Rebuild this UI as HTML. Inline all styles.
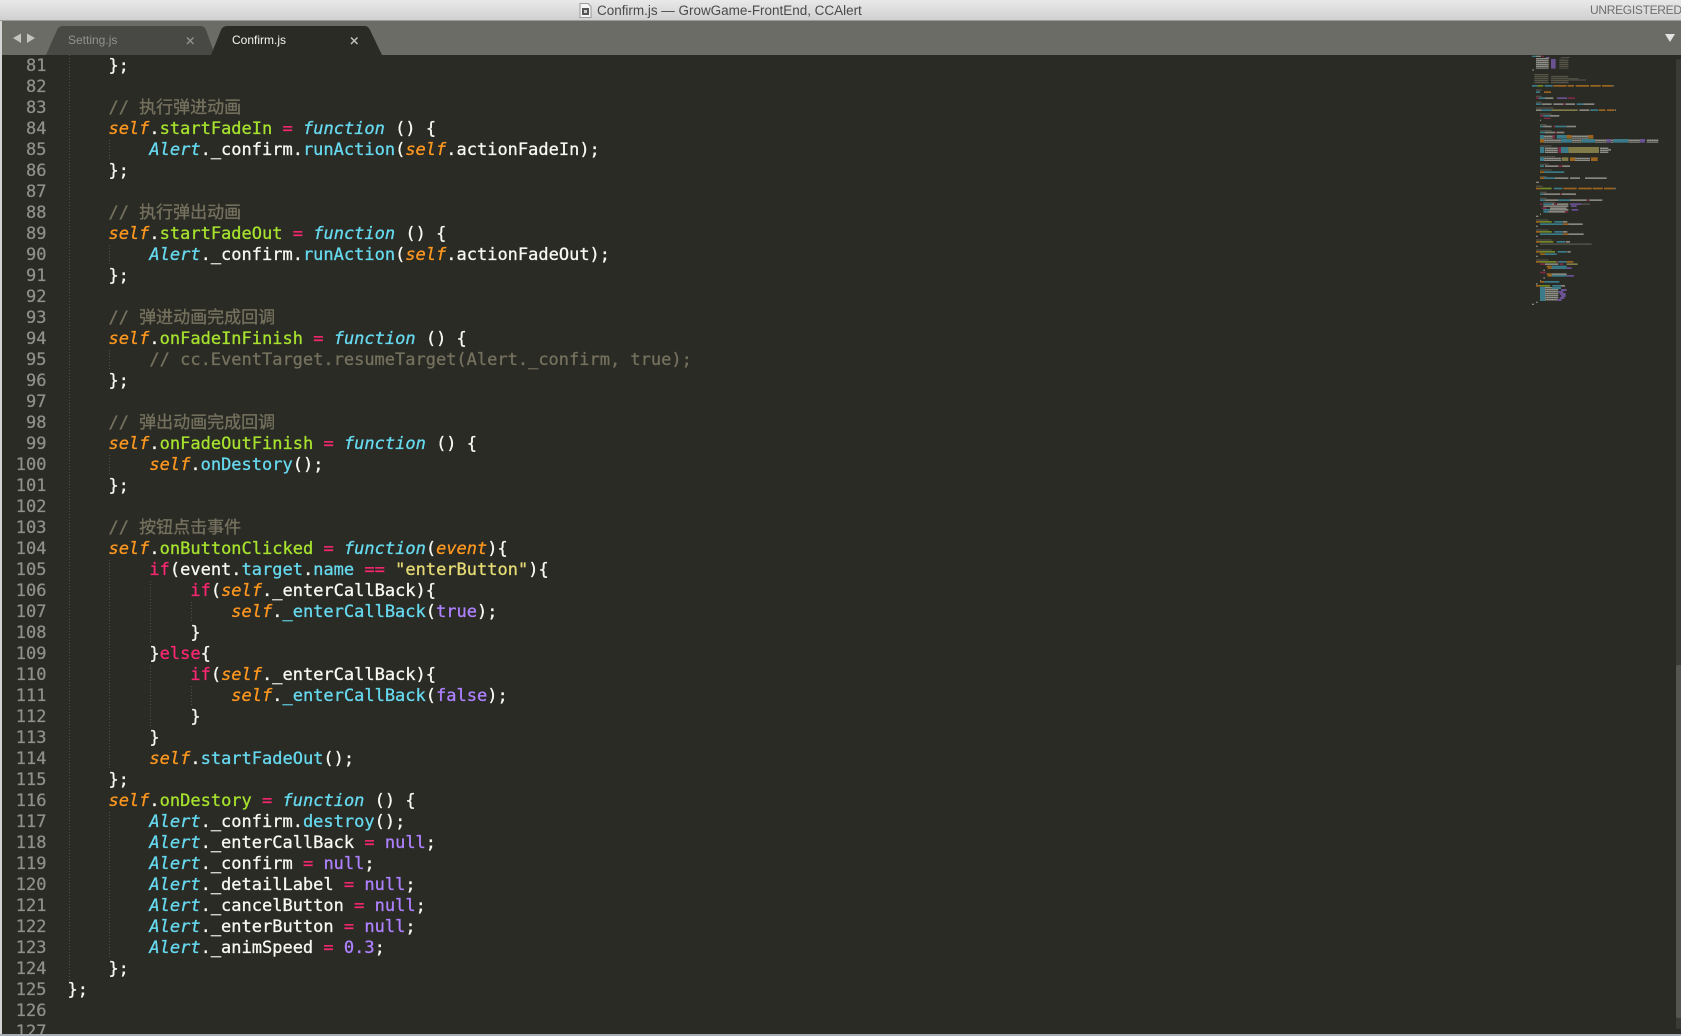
<!DOCTYPE html>
<html lang="zh"><head><meta charset="utf-8"><title>Confirm.js</title>
<style>
html,body{margin:0;padding:0;background:#2a2b25}
body{width:1681px;height:1036px;overflow:hidden;position:relative;font-family:"Liberation Sans",sans-serif}
#title{position:absolute;left:0;top:0;width:1681px;height:20px;background:linear-gradient(#e9e9e9,#d0d0d0);border-bottom:1px solid #9c9c9a;font-size:13.5px;color:#4a4a4a;line-height:21px}
#title .t{position:absolute;left:597px;top:0;white-space:nowrap;letter-spacing:-.02px}
#title .u{position:absolute;left:1590px;top:0;color:#6e6e6e;font-size:12px;letter-spacing:-.3px;white-space:nowrap}
#bar{position:absolute;left:2px;top:21px;width:1679px;height:34px;background:#6b6c66}
#ed{position:absolute;left:2px;top:55px;width:1679px;height:979px;background:#2a2b25;overflow:hidden}
#lstrip{position:absolute;left:0;top:21px;width:2px;height:1015px;background:#d4d4d4}
#bot{position:absolute;left:0;top:1034px;width:1681px;height:2px;background:#a9adb8}
.tab{position:absolute;top:0;left:0}
.tl{position:absolute;top:31px;font-size:12px;white-space:nowrap;line-height:18px}
#nums,#code{position:absolute;top:1px;margin:0;font-family:"DejaVu Sans Mono","Noto Sans CJK SC",monospace;font-size:17px;line-height:21px;white-space:pre}
#nums{left:0;width:44.5px;text-align:right;color:#8f908a;-webkit-text-stroke:.25px currentColor}
#code{left:65.5px;color:#f8f8f2;-webkit-text-stroke:.3px currentColor}
#code i{font-style:italic}
.c{color:#75715e}.k{color:#f92672}.o{color:#fd971f}.g{color:#a6e22e}.b{color:#66d9ef}.p{color:#ae81ff}.y{color:#e6db74}
.gd{position:absolute;width:1px;background:repeating-linear-gradient(#4f504a 0 1px,transparent 1px 3px)}
#sb{position:absolute;left:1676px;top:59px;width:5px;height:970px;background:#3a3b36;border-radius:2px 0 0 2px}
#th{position:absolute;left:1676px;top:665px;width:5px;height:353px;background:#555651;border-radius:2px 0 0 2px}
#mm{position:absolute;left:1525px;top:50px;opacity:.85}
</style></head><body>
<div id="title">
<svg style="position:absolute;left:579px;top:3px" width="13" height="15" viewBox="0 0 13 15"><path d="M1 .5H9L12 3.500V14.500H1Z" fill="#f4f4f4" stroke="#999"/><rect x="3" y="5" width="7" height="7" fill="#555"/><rect x="5" y="7" width="3" height="3" fill="#ccc"/></svg>
<span class="t">Confirm.js — GrowGame-FrontEnd, CCAlert</span><span class="u">UNREGISTERED</span></div>
<div id="lstrip"></div>
<div id="bar"></div>
<svg class="tab" width="1681" height="56" viewBox="0 0 1681 56">
<path d="M46 55 L57 30 Q59 26 63 26 H201 Q204 26 206 30 L215 55Z" fill="#484944"/>
<path d="M211 55 L221 30 Q223 26 227 26 H365 Q368 26 370 30 L382 55Z" fill="#2a2b25"/>
<path d="M13 38 L21 33.500 V43Z M35 38 L27 33.500 V43Z" fill="#c4c4c2"/>
<path d="M1665 34 H1675 L1670 42Z" fill="#e2e2e0"/>
<path d="M187 37.500 L193.500 44 M193.500 37.500 L187 44" stroke="#8f8f8b" stroke-width="1.500"/>
<path d="M351 37.500 L357.500 44 M357.500 37.500 L351 44" stroke="#c0c0be" stroke-width="1.500"/>
</svg>
<div class="tl" style="left:68px;color:#92928e">Setting.js</div>
<div class="tl" style="left:232px;color:#f4f4f2">Confirm.js</div>
<div id="ed">
<div class="gd" style="left:67px;top:0;height:925px"></div>
<div class="gd" style="left:107px;top:85px;height:21px"></div>
<div class="gd" style="left:107px;top:190px;height:21px"></div>
<div class="gd" style="left:107px;top:295px;height:21px"></div>
<div class="gd" style="left:107px;top:400px;height:21px"></div>
<div class="gd" style="left:107px;top:505px;height:210px"></div>
<div class="gd" style="left:107px;top:757px;height:147px"></div>
<div class="gd" style="left:148px;top:526px;height:63px"></div>
<div class="gd" style="left:148px;top:610px;height:63px"></div>
<div class="gd" style="left:189px;top:547px;height:21px"></div>
<div class="gd" style="left:189px;top:631px;height:21px"></div>
<pre id="nums">81
82
83
84
85
86
87
88
89
90
91
92
93
94
95
96
97
98
99
100
101
102
103
104
105
106
107
108
109
110
111
112
113
114
115
116
117
118
119
120
121
122
123
124
125
126
127</pre>
<pre id="code">    };

    <span class="c">// 执行弹进动画</span>
    <i class="o">self</i>.<span class="g">startFadeIn</span> <span class="k">=</span> <i class="b">function</i> () {
        <i class="b">Alert</i>._confirm.<span class="b">runAction</span>(<i class="o">self</i>.actionFadeIn);
    };

    <span class="c">// 执行弹出动画</span>
    <i class="o">self</i>.<span class="g">startFadeOut</span> <span class="k">=</span> <i class="b">function</i> () {
        <i class="b">Alert</i>._confirm.<span class="b">runAction</span>(<i class="o">self</i>.actionFadeOut);
    };

    <span class="c">// 弹进动画完成回调</span>
    <i class="o">self</i>.<span class="g">onFadeInFinish</span> <span class="k">=</span> <i class="b">function</i> () {
        <span class="c">// cc.EventTarget.resumeTarget(Alert._confirm, true);</span>
    };

    <span class="c">// 弹出动画完成回调</span>
    <i class="o">self</i>.<span class="g">onFadeOutFinish</span> <span class="k">=</span> <i class="b">function</i> () {
        <i class="o">self</i>.<span class="b">onDestory</span>();
    };

    <span class="c">// 按钮点击事件</span>
    <i class="o">self</i>.<span class="g">onButtonClicked</span> <span class="k">=</span> <i class="b">function</i>(<i class="o">event</i>){
        <span class="k">if</span>(event.<span class="b">target</span>.<span class="b">name</span> <span class="k">==</span> <span class="y">"enterButton"</span>){
            <span class="k">if</span>(<i class="o">self</i>._enterCallBack){
                <i class="o">self</i>.<span class="b">_enterCallBack</span>(<span class="p">true</span>);
            }
        }<span class="k">else</span>{
            <span class="k">if</span>(<i class="o">self</i>._enterCallBack){
                <i class="o">self</i>.<span class="b">_enterCallBack</span>(<span class="p">false</span>);
            }
        }
        <i class="o">self</i>.<span class="b">startFadeOut</span>();
    };
    <i class="o">self</i>.<span class="g">onDestory</span> <span class="k">=</span> <i class="b">function</i> () {
        <i class="b">Alert</i>._confirm.<span class="b">destroy</span>();
        <i class="b">Alert</i>._enterCallBack <span class="k">=</span> <span class="p">null</span>;
        <i class="b">Alert</i>._confirm <span class="k">=</span> <span class="p">null</span>;
        <i class="b">Alert</i>._detailLabel <span class="k">=</span> <span class="p">null</span>;
        <i class="b">Alert</i>._cancelButton <span class="k">=</span> <span class="p">null</span>;
        <i class="b">Alert</i>._enterButton <span class="k">=</span> <span class="p">null</span>;
        <i class="b">Alert</i>._animSpeed <span class="k">=</span> <span class="p">0.3</span>;
    };
};

</pre>
</div>
<div id="sb"></div><div id="th"></div>
<svg id="mm" width="140" height="260" viewBox="0 0 420 780">
<defs><style>.t{fill:#3f8a9b}.w{fill:#98988f}.v{fill:#7458a6}.r{fill:#b0701f}.n{fill:#7f9a24}.m{fill:#8c2a4c}.l{fill:#8f8a50}.d{fill:#55544a}.z{fill:url(#s)}.x{fill:url(#e)}</style>
<pattern id="s" width="7" height="6" patternUnits="userSpaceOnUse"><rect width="7" height="4" fill="#a0a098"/><rect x="3" y="4" width="4" height="2" fill="#6a6a63"/></pattern>
<pattern id="e" width="6" height="6" patternUnits="userSpaceOnUse"><rect width="6" height="4" fill="#5e5c4c"/></pattern></defs>
<rect class="t" x="21" y="17" width="12" height="4"/><rect class="w" x="33" y="17" width="15" height="4"/><rect class="m" x="50" y="17" width="7" height="4"/><rect class="v" x="62" y="21" width="12" height="4"/><rect class="d" x="108" y="21" width="27" height="3"/>
<rect class="z" x="33" y="24" width="38" height="32"/><rect class="v" x="78" y="27" width="14" height="29"/><rect class="x" x="103" y="26" width="27" height="30"/>
<rect class="w" x="22" y="58" width="5" height="4"/>
<rect class="x" x="28" y="72" width="42" height="28"/><rect class="x" x="78" y="76" width="52" height="24"/><rect class="d" x="130" y="84" width="30" height="4"/><rect class="d" x="130" y="88" width="53" height="4"/>
<rect class="t" x="21" y="105" width="16" height="5"/><rect class="n" x="37" y="105" width="18" height="5"/><rect class="t" x="59" y="105" width="24" height="5"/><rect class="r" x="85" y="105" width="40" height="5"/><rect class="r" x="128" y="105" width="19" height="5"/><rect class="r" x="152" y="105" width="40" height="5"/><rect class="r" x="196" y="105" width="31" height="5"/><rect class="r" x="231" y="105" width="31" height="5"/><rect class="w" x="263" y="105" width="3" height="5"/>
<rect class="d" x="33" y="118" width="17" height="4"/><rect class="t" x="33" y="124" width="12" height="5"/><rect class="r" x="57" y="124" width="21" height="5"/>
<rect class="d" x="33" y="137" width="17" height="4"/><rect class="m" x="33" y="142" width="9" height="5"/><rect class="t" x="42" y="142" width="18" height="5"/><rect class="w" x="60" y="142" width="25" height="5"/><rect class="v" x="96" y="142" width="30" height="5"/><rect class="m" x="128" y="142" width="22" height="5"/>
<rect class="d" x="33" y="155" width="17" height="4"/><rect class="t" x="33" y="160" width="15" height="5"/><rect class="w" x="50" y="160" width="30" height="5"/><rect class="w" x="85" y="160" width="30" height="5"/><rect class="m" x="115" y="160" width="7" height="5"/><rect class="w" x="122" y="160" width="28" height="5"/><rect class="t" x="155" y="160" width="20" height="5"/><rect class="w" x="175" y="160" width="33" height="5"/>
<rect class="d" x="33" y="172" width="52" height="4"/><rect class="w" x="33" y="178" width="17" height="5"/><rect class="t" x="50" y="178" width="30" height="5"/><rect class="l" x="80" y="178" width="78" height="5"/><rect class="w" x="163" y="178" width="30" height="5"/><rect class="t" x="196" y="178" width="24" height="5"/><rect class="r" x="222" y="178" width="19" height="5"/><rect class="r" x="246" y="178" width="22" height="5"/><rect class="w" x="270" y="178" width="3" height="5"/>
<rect class="d" x="45" y="190" width="35" height="4"/><rect class="m" x="45" y="195" width="10" height="5"/><rect class="t" x="55" y="195" width="20" height="5"/><rect class="w" x="75" y="195" width="28" height="5"/><rect class="m" x="57" y="203" width="20" height="4"/><rect class="w" x="45" y="209" width="3" height="4"/>
<rect class="d" x="45" y="222" width="20" height="4"/><rect class="t" x="45" y="227" width="10" height="5"/><rect class="w" x="55" y="227" width="25" height="5"/><rect class="m" x="85" y="227" width="5" height="5"/><rect class="t" x="90" y="227" width="35" height="5"/><rect class="w" x="125" y="227" width="28" height="5"/>
<rect class="d" x="45" y="240" width="35" height="4"/><rect class="t" x="45" y="245" width="15" height="5"/><rect class="w" x="60" y="245" width="30" height="5"/><rect class="m" x="90" y="245" width="5" height="5"/><rect class="w" x="95" y="245" width="23" height="5"/>
<rect class="t" x="45" y="255" width="12" height="12"/><rect class="r" x="45" y="267" width="12" height="11"/><rect class="z" x="57" y="255" width="26" height="11"/><rect class="m" x="83" y="255" width="7" height="11"/><rect class="t" x="95" y="255" width="30" height="11"/><rect class="r" x="125" y="255" width="15" height="11"/><rect class="z" x="140" y="255" width="50" height="11"/><rect class="r" x="190" y="255" width="15" height="11"/>
<rect class="z" x="57" y="267" width="51" height="11"/><rect class="t" x="108" y="267" width="32" height="11"/><rect class="z" x="140" y="267" width="30" height="11"/><rect class="t" x="170" y="267" width="40" height="11"/><rect class="z" x="210" y="267" width="35" height="11"/><rect class="v" x="245" y="267" width="13" height="11"/><rect class="z" x="258" y="267" width="7" height="11"/><rect class="t" x="265" y="267" width="45" height="11"/><rect class="z" x="310" y="267" width="35" height="11"/><rect class="v" x="345" y="267" width="15" height="11"/><rect class="z" x="365" y="267" width="35" height="11"/>
<rect class="d" x="45" y="286" width="35" height="4"/><rect class="t" x="45" y="291" width="13" height="18"/><rect class="z" x="60" y="291" width="38" height="18"/><rect class="m" x="100" y="291" width="8" height="18"/><rect class="t" x="108" y="291" width="22" height="18"/><rect class="l" x="130" y="291" width="92" height="18"/><rect class="z" x="225" y="291" width="25" height="18"/><rect class="w" x="250" y="297" width="8" height="5"/>
<rect class="d" x="45" y="318" width="45" height="4"/><rect class="t" x="45" y="322" width="12" height="11"/><rect class="z" x="57" y="322" width="51" height="11"/><rect class="l" x="110" y="322" width="20" height="11"/><rect class="r" x="135" y="322" width="15" height="11"/><rect class="z" x="150" y="322" width="45" height="11"/><rect class="r" x="198" y="322" width="20" height="11"/>
<rect class="d" x="45" y="341" width="25" height="4"/><rect class="t" x="45" y="346" width="12" height="5"/><rect class="w" x="60" y="346" width="40" height="5"/><rect class="m" x="100" y="346" width="12" height="5"/><rect class="w" x="112" y="346" width="23" height="5"/>
<rect class="d" x="45" y="358" width="35" height="4"/><rect class="r" x="45" y="364" width="12" height="5"/><rect class="t" x="57" y="364" width="61" height="5"/>
<rect class="d" x="45" y="378" width="20" height="4"/><rect class="r" x="45" y="382" width="12" height="5"/><rect class="t" x="57" y="382" width="33" height="5"/><rect class="w" x="90" y="382" width="40" height="5"/><rect class="w" x="135" y="382" width="30" height="5"/><rect class="w" x="180" y="382" width="65" height="5"/>
<g transform="translate(0,375)">
<rect class="w" x="33" y="20" width="9" height="4"/>
<rect class="d" x="33" y="32" width="20" height="4"/><rect class="r" x="33" y="38" width="12" height="5"/><rect class="n" x="45" y="38" width="35" height="5"/><rect class="t" x="87" y="38" width="25" height="5"/><rect class="r" x="115" y="38" width="40" height="5"/><rect class="r" x="160" y="38" width="40" height="5"/><rect class="r" x="203" y="38" width="30" height="5"/><rect class="r" x="237" y="38" width="30" height="5"/><rect class="w" x="268" y="38" width="4" height="5"/>
<rect class="d" x="45" y="50" width="20" height="4"/><rect class="t" x="45" y="55" width="10" height="5"/><rect class="w" x="55" y="55" width="50" height="5"/><rect class="m" x="105" y="55" width="5" height="5"/><rect class="w" x="110" y="55" width="43" height="5"/>
<rect class="d" x="45" y="68" width="20" height="4"/><rect class="t" x="45" y="73" width="15" height="5"/><rect class="w" x="60" y="73" width="40" height="5"/><rect class="t" x="100" y="73" width="35" height="5"/><rect class="w" x="135" y="73" width="50" height="5"/><rect class="m" x="185" y="73" width="7" height="5"/><rect class="w" x="193" y="73" width="39" height="5"/>
<rect class="d" x="55" y="81" width="35" height="3"/><rect class="m" x="45" y="85" width="7" height="5"/><rect class="t" x="55" y="85" width="25" height="5"/><rect class="w" x="80" y="85" width="8" height="5"/><rect class="m" x="88" y="85" width="7" height="5"/><rect class="w" x="96" y="85" width="34" height="5"/><rect class="v" x="135" y="85" width="35" height="5"/><rect class="d" x="170" y="85" width="25" height="5"/>
<rect class="w" x="55" y="91" width="75" height="5"/><rect class="v" x="138" y="91" width="17" height="5"/><rect class="m" x="50" y="97" width="15" height="5"/><rect class="w" x="75" y="97" width="50" height="5"/><rect class="t" x="55" y="102" width="20" height="5"/><rect class="w" x="75" y="102" width="55" height="5"/><rect class="v" x="140" y="102" width="20" height="5"/><rect class="t" x="55" y="108" width="15" height="5"/><rect class="w" x="70" y="108" width="50" height="5"/><rect class="m" x="120" y="108" width="8" height="5"/>
<rect class="w" x="45" y="116" width="3" height="4"/><rect class="w" x="33" y="122" width="7" height="4"/>
<rect class="d" x="33" y="133" width="37" height="4"/><rect class="r" x="33" y="138" width="12" height="5"/><rect class="n" x="45" y="138" width="35" height="5"/><rect class="t" x="88" y="138" width="24" height="5"/><rect class="w" x="113" y="138" width="14" height="5"/><rect class="t" x="45" y="145" width="70" height="5"/><rect class="r" x="115" y="145" width="15" height="5"/><rect class="w" x="130" y="145" width="43" height="5"/><rect class="w" x="33" y="152" width="5" height="4"/>
<rect class="d" x="33" y="163" width="37" height="4"/><rect class="r" x="33" y="168" width="12" height="5"/><rect class="n" x="45" y="168" width="35" height="5"/><rect class="t" x="88" y="168" width="24" height="5"/><rect class="w" x="113" y="168" width="14" height="5"/><rect class="t" x="45" y="175" width="70" height="5"/><rect class="r" x="115" y="175" width="15" height="5"/><rect class="w" x="130" y="175" width="46" height="5"/><rect class="w" x="33" y="182" width="5" height="4"/>
<rect class="d" x="33" y="193" width="47" height="4"/><rect class="r" x="33" y="198" width="12" height="5"/><rect class="n" x="45" y="198" width="40" height="5"/><rect class="t" x="95" y="198" width="25" height="5"/><rect class="w" x="122" y="198" width="13" height="5"/><rect class="d" x="45" y="205" width="155" height="5"/><rect class="w" x="33" y="212" width="5" height="4"/>
<rect class="d" x="33" y="223" width="47" height="4"/><rect class="r" x="33" y="228" width="12" height="5"/><rect class="n" x="45" y="228" width="45" height="5"/><rect class="t" x="98" y="228" width="27" height="5"/><rect class="w" x="127" y="228" width="10" height="5"/><rect class="r" x="45" y="235" width="15" height="5"/><rect class="t" x="60" y="235" width="35" height="5"/><rect class="w" x="33" y="242" width="5" height="4"/>
<rect class="d" x="33" y="253" width="37" height="4"/><rect class="r" x="33" y="258" width="12" height="5"/><rect class="n" x="45" y="258" width="50" height="5"/><rect class="m" x="95" y="258" width="5" height="5"/><rect class="t" x="100" y="258" width="25" height="5"/><rect class="r" x="125" y="258" width="20" height="5"/><rect class="m" x="45" y="265" width="15" height="5"/><rect class="w" x="60" y="265" width="40" height="5"/><rect class="m" x="105" y="265" width="10" height="5"/><rect class="l" x="125" y="265" width="33" height="5"/>
<rect class="r" x="65" y="272" width="15" height="5"/><rect class="t" x="80" y="272" width="45" height="5"/><rect class="r" x="68" y="277" width="12" height="5"/><rect class="t" x="80" y="277" width="45" height="5"/><rect class="v" x="125" y="277" width="15" height="5"/><rect class="w" x="55" y="284" width="5" height="4"/>
<rect class="m" x="45" y="290" width="17" height="5"/><rect class="r" x="65" y="295" width="15" height="5"/><rect class="w" x="80" y="295" width="45" height="5"/><rect class="r" x="68" y="300" width="12" height="5"/><rect class="t" x="80" y="300" width="45" height="5"/><rect class="v" x="125" y="300" width="22" height="5"/><rect class="w" x="55" y="307" width="5" height="4"/><rect class="w" x="45" y="315" width="3" height="3"/><rect class="r" x="45" y="318" width="13" height="5"/><rect class="t" x="58" y="318" width="45" height="5"/><rect class="w" x="33" y="325" width="5" height="4"/>
<rect class="r" x="33" y="330" width="12" height="5"/><rect class="n" x="45" y="330" width="30" height="5"/><rect class="t" x="82" y="330" width="26" height="5"/><rect class="w" x="108" y="330" width="12" height="5"/>
<rect class="t" x="45" y="336" width="15" height="42"/><rect class="z" x="60" y="336" width="40" height="42"/><rect class="t" x="80" y="336" width="28" height="6"/><rect class="v" x="108" y="342" width="17" height="6"/><rect class="v" x="100" y="348" width="15" height="6"/><rect class="v" x="104" y="354" width="18" height="6"/><rect class="v" x="108" y="360" width="14" height="6"/><rect class="v" x="104" y="366" width="14" height="6"/><rect class="v" x="96" y="372" width="14" height="6"/>
<rect class="w" x="33" y="380" width="5" height="4"/><rect class="w" x="21" y="386" width="6" height="4"/>
</g>
</svg>
<div id="bot"></div>
</body></html>
